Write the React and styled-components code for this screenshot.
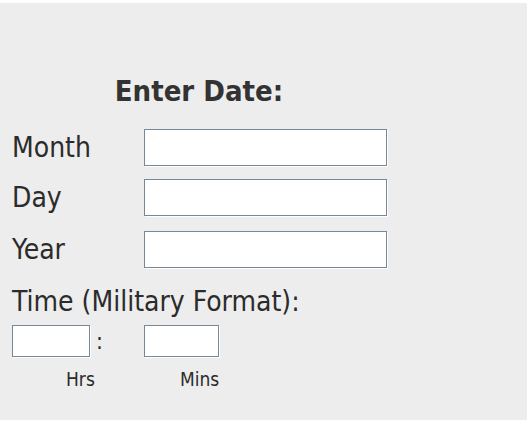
import React from "react";
import styled, { createGlobalStyle } from "styled-components";

const GlobalStyle = createGlobalStyle`
  html, body {
    margin: 0;
    padding: 0;
    background: #ffffff;
  }
  body {
    font-family: "DejaVu Sans Condensed", "DejaVu Sans", sans-serif;
    font-stretch: condensed;
  }
`;

const Panel = styled.div`
  margin-top: 3px;
  height: 417px;
  background: #ededed;
  padding: 0 12px;
  box-sizing: border-box;
  color: #2b2b2b;
`;

const Form = styled.div`
  width: 374px;
  padding-top: 72px;
`;

const Heading = styled.h2`
  margin: 0 0 21px;
  font-size: 29px;
  line-height: 33px;
  font-weight: bold;
  text-align: center;
  color: #333;
`;

const Row = styled.div`
  display: grid;
  grid-template-columns: 132px 1fr;
  align-items: center;
  margin-bottom: ${({ gap }) => gap}px;
`;

const Label = styled.label`
  font-size: 28px;
  line-height: 37px;
`;

const Field = styled.input`
  box-sizing: border-box;
  width: ${({ w }) => w}px;
  height: ${({ h }) => h}px;
  margin: 0;
  padding: 0 4px;
  border: 1px solid #778899;
  box-shadow: 1px 1px 0 #ffffff;
  background: #fff;
  outline: none;
  font-size: 16px;
`;

const TimeLabel = styled.div`
  font-size: 28px;
  line-height: 32px;
  margin: 18px 0 7px;
`;

const TimeRow = styled.div`
  display: grid;
  grid-template-columns: 132px auto;
  align-items: center;
`;

const Colon = styled.span`
  display: flex;
  align-items: center;
  gap: 6px;
  font-size: 23px;
`;

const Units = styled.div`
  display: grid;
  grid-template-columns: 132px auto;
  margin-top: 11px;
  font-size: 19px;
  line-height: 22px;
`;

const Unit = styled.span`
  padding-left: ${({ pad }) => pad}px;
`;

export default function App() {
  return (
    <>
      <GlobalStyle />
      <Panel>
        <Form>
          <Heading>Enter Date:</Heading>
          <Row gap={13}>
            <Label>Month</Label>
            <Field w={243} h={37} />
          </Row>
          <Row gap={15}>
            <Label>Day</Label>
            <Field w={243} h={37} />
          </Row>
          <Row gap={0}>
            <Label>Year</Label>
            <Field w={243} h={37} />
          </Row>
          <TimeLabel>Time (Military Format):</TimeLabel>
          <TimeRow>
            <Colon>
              <Field w={78} h={32} />:
            </Colon>
            <Field w={75} h={32} />
          </TimeRow>
          <Units>
            <Unit pad={54}>Hrs</Unit>
            <Unit pad={36}>Mins</Unit>
          </Units>
        </Form>
      </Panel>
    </>
  );
}
